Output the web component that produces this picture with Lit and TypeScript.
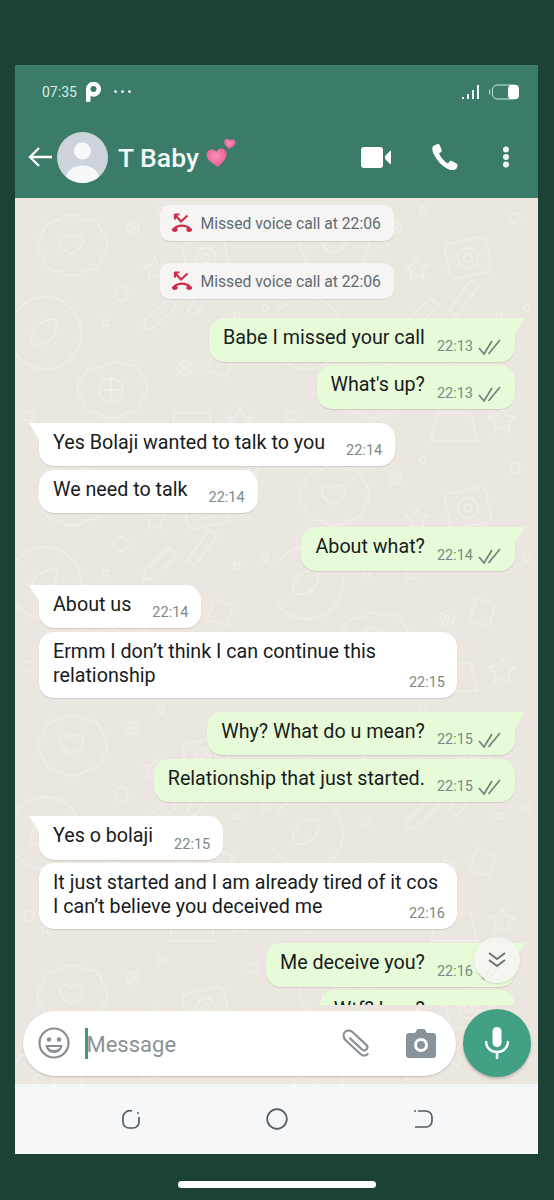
import { LitElement, html, css, svg } from "lit";
import { customElement } from "lit/decorators.js";

type Msg = { text: string[]; time: string; out?: boolean; tail?: boolean; group?: boolean; wide?: boolean };

const messages: Msg[] = [
  { text: ["Babe I missed your call"], time: "22:13", out: true, tail: true },
  { text: ["What's up?"], time: "22:13", out: true },
  { text: ["Yes Bolaji wanted to talk to you"], time: "22:14", tail: true, group: true },
  { text: ["We need to talk"], time: "22:14" },
  { text: ["About what?"], time: "22:14", out: true, tail: true, group: true },
  { text: ["About us"], time: "22:14", tail: true, group: true },
  { text: ["Ermm I don’t think I can continue this", "relationship"], time: "22:15", wide: true },
  { text: ["Why? What do u mean?"], time: "22:15", out: true, tail: true, group: true },
  { text: ["Relationship that just started."], time: "22:15", out: true },
  { text: ["Yes o bolaji"], time: "22:15", tail: true, group: true },
  { text: ["It just started and I am already tired of it cos", "I can’t believe you deceived me"], time: "22:16", wide: true },
  { text: ["Me deceive you?"], time: "22:16", out: true, tail: true, group: true },
  { text: ["Wtf? how?"], time: "22:16", out: true },
];

const ticks = html`<svg class="ticks" viewBox="0 0 24 16" width="24" height="16">
  <path d="M1 9l5 6L14 2M10.500 15L22 1" fill="none" stroke="#72837b" stroke-width="1.700" />
</svg>`;

const missedIcon = html`<svg viewBox="0 0 22 20" width="22" height="20">
  <path d="M4.500 2.500l5.500 6 6.500-6" fill="none" stroke="#cc2d4a" stroke-width="2.200" />
  <path d="M3.500 1.500h5M4 1v5.500" fill="none" stroke="#cc2d4a" stroke-width="2.200" />
  <path d="M3 16c4-4.500 12-4.500 16 0" fill="none" stroke="#cc2d4a" stroke-width="2.400" />
  <ellipse cx="3.800" cy="16.800" rx="2.900" ry="2.100" fill="#cc2d4a" />
  <ellipse cx="18.200" cy="16.800" rx="2.900" ry="2.100" fill="#cc2d4a" />
</svg>`;

const heart = "M10 18C4 13 0 10 0 5.500 0 2 2.500 0 5 0c2 0 4 1 5 3 1-2 3-3 5-3 2.500 0 5 2 5 5.500C20 10 16 13 10 18z";

// wallpaper tile: bumpy blobs, small rings and stars, a camera, a pencil
const doodles = svg`
  <path d="M45 22c8-8 18-6 24 0 9-2 17 4 18 13 7 6 7 17 0 23 0 9-8 15-17 14-6 7-18 8-24 1-9 1-17-5-18-14-7-6-7-17 0-23 1-9 8-15 17-14z" />
  <path d="M56 40c5-6 14-2 12 5-2 6-8 9-12 11-5-3-10-6-11-11-1-7 7-10 11-5z" />
  <circle cx="30" cy="135" r="36" />
  <path d="M16 145c-2-16 12-24 24-24 6 12-6 30-24 24z" />
  <circle cx="118" cy="30" r="6" /><circle cx="118" cy="30" r="2" />
  <path d="M140 60l3 7 8 1-6 5 2 8-7-4-7 4 2-8-6-5 8-1z" />
  <rect x="170" y="42" width="42" height="36" rx="6" transform="rotate(-12 191 60)" />
  <circle cx="191" cy="60" r="10" /><circle cx="191" cy="60" r="4" />
  <circle cx="106" cy="96" r="7" /><circle cx="238" cy="20" r="5" />
  <path d="M130 122l24-22 8 8-24 22-10 2zM172 112l22-30 8 6-22 30z" />
  <path d="M86 170c5-6 15-8 21-3 9-3 18 2 20 11 7 6 7 17 0 23-1 9-9 15-18 14-6 7-18 7-24 0-9 1-17-5-18-14-6-6-6-16 1-22 1-5 8-11 18-9z" />
  <circle cx="96" cy="192" r="12" />
  <path d="M96 180v24M84 192h24" />
  <circle cx="170" cy="170" r="7" /><circle cx="170" cy="170" r="2.500" />
  <path d="M200 150l18 8-6 20-20-6zM225 210l4 8 9 1-7 6 2 9-8-5-8 5 2-9-7-6 9-1z" />
  <path d="M160 215h34l6 28h-46z" />
  <circle cx="14" cy="218" r="5" /><circle cx="146" cy="12" r="3" /><circle cx="90" cy="125" r="3" />
  <circle cx="250" cy="110" r="3" /><circle cx="222" cy="118" r="3" /><circle cx="30" cy="232" r="3" />
`;

@customElement("app-root")
export class AppRoot extends LitElement {
  static styles = css`
    :host {
      display: block;
      width: 554px;
      height: 1200px;
      background: #1c4237;
      font-family: Roboto, "Liberation Sans", sans-serif;
      overflow: hidden;
    }
    .page {
      display: flex;
      flex-direction: column;
      align-items: center;
      padding-top: 65px;
    }
    .screen {
      width: 523px;
      height: 1089px;
      margin-left: -1px;
      display: flex;
      flex-direction: column;
    }
    .top {
      background: #3a7c69;
      color: #fff;
      height: 133px;
      flex: none;
    }
    .status {
      height: 53px;
      padding: 0 18px 0 27px;
      display: flex;
      align-items: center;
      gap: 9px;
      color: #dcebe6;
      font-size: 14px;
    }
    .status .spacer {
      flex: 1;
    }
    .battery {
      margin-left: -2px;
    }
    .dots {
      display: flex;
      gap: 4px;
      margin-left: 3px;
    }
    .dots i {
      width: 3px;
      height: 3px;
      border-radius: 50%;
      background: #e6f0ec;
    }
    .bar {
      height: 80px;
      display: flex;
      align-items: center;
      padding: 0 0 2px 12px;
      box-sizing: border-box;
    }
    .avatar {
      margin-left: 4px;
      flex: none;
    }
    .name {
      font-size: 26.5px;
      font-weight: 500;
      margin-left: 10px;
      color: #f2f8f6;
      display: flex;
      align-items: center;
      gap: 7px;
    }
    .hearts {
      margin-top: -6px;
    }
    .actions {
      margin-left: auto;
      display: flex;
      align-items: center;
    }
    .call {
      margin-left: 41px;
    }
    .kebab {
      margin: 0 28px 0 44px;
    }
    .chat {
      position: relative;
      flex: 1;
      min-height: 0;
      background: #ece6e0;
      overflow: hidden;
    }
    .pattern {
      position: absolute;
      inset: 0;
    }
    .thread {
      position: relative;
      height: 807px;
      box-sizing: border-box;
      overflow: hidden;
      display: flex;
      flex-direction: column;
      padding: 7px 23px 0 24px;
    }
    .missed {
      flex: none;
      align-self: center;
      height: 36px;
      width: 234px;
      box-sizing: border-box;
      margin: 0 0 22px -1px;
      padding-left: 11px;
      display: flex;
      align-items: center;
      gap: 8px;
      border-radius: 10px;
      background: #f6f5f3;
      box-shadow: 0 1px 1px rgba(0, 0, 0, 0.1);
      color: #5f6b72;
      font-size: 15.7px;
    }
    .missed + .bubble {
      margin-top: -3px;
    }
    .bubble {
      flex: none;
      position: relative;
      align-self: flex-start;
      display: flex;
      align-items: flex-end;
      box-sizing: border-box;
      height: 43.5px;
      margin-top: 3.5px;
      padding: 0 13px 7px 14px;
      border-radius: 15px;
      background: #fff;
      box-shadow: 0 1px 1px rgba(0, 0, 0, 0.12);
      color: #171c1c;
      font-size: 19.7px;
      line-height: 24px;
      white-space: nowrap;
    }
    .bubble.group {
      margin-top: 14px;
    }
    .bubble.wide {
      height: 66px;
      width: 418px;
    }
    .bubble.tail.in {
      border-top-left-radius: 0;
    }
    .bubble.tail.out {
      border-top-right-radius: 0;
    }
    .bubble.tail::before {
      content: "";
      position: absolute;
      top: 0;
      width: 0;
      height: 0;
      border-top: 16px solid #fff;
    }
    .bubble.tail.in::before {
      left: -10px;
      border-left: 10px solid transparent;
    }
    .bubble.tail.out::before {
      right: -10px;
      border-right: 10px solid transparent;
      border-top-color: #e8fbd9;
    }
    .bubble.out {
      align-self: flex-end;
      background: #e8fbd9;
      padding-right: 13px;
    }
    .text {
      align-self: flex-start;
      padding-top: 8px;
    }
    .meta {
      margin-left: auto;
      padding-left: 21px;
      display: flex;
      align-items: center;
      gap: 5px;
      color: #7b8a85;
      font-size: 14.5px;
      line-height: 16px;
    }
    .out .meta {
      padding-left: 12px;
    }
    /* the time sits in the corner under the wrapped lines */
    .wide .meta {
      position: absolute;
      right: 12px;
      bottom: 7px;
    }
    .ticks {
      flex: none;
    }
    .scroll {
      position: absolute;
      left: 459px;
      top: 739px;
      width: 46px;
      height: 46px;
      border-radius: 50%;
      background: rgba(245, 245, 240, 0.93);
      box-shadow: 0 1px 2px rgba(0, 0, 0, 0.15);
      display: flex;
      align-items: center;
      justify-content: center;
    }
    .composer {
      position: absolute;
      left: 8px;
      right: 8px;
      bottom: 8px;
      height: 66px;
      display: flex;
      align-items: center;
      gap: 7px;
    }
    .field {
      flex: 1;
      height: 65px;
      background: #fff;
      border-radius: 33px;
      box-shadow: 0 1px 2px rgba(0, 0, 0, 0.18);
      display: flex;
      align-items: center;
      padding-left: 15px;
      color: #8a9296;
      font-size: 22px;
    }
    .hint {
      padding-top: 3px;
      margin-left: -1px;
    }
    .caret {
      width: 2.5px;
      height: 31px;
      background: #3f9a80;
      margin: 0 0 0 15px;
    }
    .clip {
      margin-left: auto;
    }
    .cam {
      margin: 0 20px 0 34px;
    }
    .mic {
      flex: none;
      width: 68px;
      height: 68px;
      border-radius: 50%;
      background: #42a085;
      box-shadow: 0 2px 3px rgba(0, 0, 0, 0.2);
      display: flex;
      align-items: center;
      justify-content: center;
      margin-right: -1px;
    }
    .nav {
      flex: none;
      height: 70px;
      background: #f5f7f9;
      display: flex;
      align-items: center;
      justify-content: center;
      gap: 124px;
    }
    .pill {
      width: 198px;
      height: 7px;
      border-radius: 4px;
      background: #fff;
      margin-top: 27px;
    }
  `;

  renderBubble(m: Msg) {
    const cls = ["bubble", m.out ? "out" : "in", m.tail ? "tail" : "", m.group ? "group" : "", m.wide ? "wide" : ""].join(" ");
    return html`<div class=${cls}>
      <div class="text">${m.text.map((t) => html`<div>${t}</div>`)}</div>
      <div class="meta">${m.time}${m.out ? ticks : ""}</div>
    </div>`;
  }

  render() {
    return html`<div class="page">
      <div class="screen">
        <div class="top">
          <div class="status">
            <span>07:35</span>
            <svg viewBox="0 0 16 20" width="16" height="20">
              <path fill-rule="evenodd" d="M0 7a7.500 7.500 0 1 1 4.500 7v5a1 1 0 0 1-1 1H1a1 1 0 0 1-1-1zM7.500 4a3 3 0 1 0 0 6 3 3 0 0 0 0-6z" fill="#fff" />
            </svg>
            <span class="dots"><i></i><i></i><i></i></span>
            <span class="spacer"></span>
            <svg viewBox="0 0 20 16" width="20" height="16">
              <path d="M2 13v2M7 10v5M12 6v9M17 1v14" stroke="#f0f6f4" stroke-width="2" fill="none" />
            </svg>
            <svg class="battery" viewBox="0 0 32 16" width="32" height="16">
              <path d="M2 5.500q-1 2.500 0 5" stroke="#cfe2dc" fill="none" />
              <rect x="4.500" y="1" width="26" height="14" rx="4.500" fill="none" stroke="#cfe2dc" />
              <rect x="20" y="1" width="11" height="14" rx="3.500" fill="#fff" />
            </svg>
          </div>
          <div class="bar">
            <svg viewBox="0 0 26 24" width="26" height="24">
              <path d="M25 12H3M12 3l-9 9 9 9" fill="none" stroke="#fff" stroke-width="2.300" />
            </svg>
            <svg class="avatar" viewBox="0 0 51 51" width="51" height="51">
              <defs><clipPath id="av"><circle cx="25.500" cy="25.500" r="25.500" /></clipPath></defs>
              <circle cx="25.500" cy="25.500" r="25.500" fill="#cdd3da" />
              <g clip-path="url(#av)" fill="#f7f8f9">
                <circle cx="25.500" cy="19" r="8.500" />
                <ellipse cx="25.500" cy="46" rx="16.500" ry="12.500" />
              </g>
            </svg>
            <div class="name">
              <span>T Baby</span>
              <svg class="hearts" viewBox="0 0 30 30" width="30" height="30">
                <defs>
                  <radialGradient id="hg" cx="0.45" cy="0.4" r="0.65">
                    <stop offset="0" stop-color="#fb8fb8" />
                    <stop offset="1" stop-color="#e9588f" />
                  </radialGradient>
                </defs>
                <path d=${heart} fill="url(#hg)" transform="translate(1 10) rotate(-6 10 9)" />
                <path d=${heart} fill="url(#hg)" transform="translate(18 0) scale(0.56) rotate(8 10 9)" />
              </svg>
            </div>
            <div class="actions">
              <svg viewBox="0 0 30 21" width="30" height="21">
                <rect width="22" height="21" rx="3" fill="#fff" />
                <path d="M24 9l5-5c.500-.500 1-.2 1 .5v12c0 .7-.500 1-1 .5l-5-5z" fill="#fff" />
              </svg>
              <svg class="call" viewBox="0 0 26 26" width="26" height="26">
                <path d="M5.500 0L2 1.500C-.5 3 0 6.500 2 10.500c3 6 7.500 11 13 14 4 2 7.500 2 9.500 0l1-2.500c.2-1-.2-2-1-2.500l-4.500-2.500c-1-.6-2-.2-2.500.5l-1.500 2c-3-1.500-7-5.500-9-10l2-1.500c.8-.6 1-1.500.6-2.500L7.500.8C7 .2 6.300-.2 5.500 0z" fill="#fff" />
              </svg>
              <svg class="kebab" viewBox="0 0 8 22" width="8" height="22">
                <circle cx="4" cy="3.500" r="3" fill="#f2f7f5" /><circle cx="4" cy="11" r="3" fill="#f2f7f5" /><circle cx="4" cy="18.500" r="3" fill="#f2f7f5" />
              </svg>
            </div>
          </div>
        </div>
        <div class="chat">
          <svg class="pattern" width="100%" height="100%">
            <defs>
              <pattern id="doodle" width="262" height="250" patternUnits="userSpaceOnUse">
                <g fill="none" stroke="#f2eee9" stroke-width="1.300">${doodles}</g>
              </pattern>
            </defs>
            <rect width="100%" height="100%" fill="url(#doodle)" />
          </svg>
          <div class="thread">
            <div class="missed">${missedIcon}<span>Missed voice call at 22:06</span></div>
            <div class="missed">${missedIcon}<span>Missed voice call at 22:06</span></div>
            ${messages.map((m) => this.renderBubble(m))}
          </div>
          <div class="scroll">
            <svg viewBox="0 0 20 20" width="20" height="20">
              <path d="M2 3l8 6 8-6M2 10l8 6 8-6" fill="none" stroke="#66757a" stroke-width="2" />
            </svg>
          </div>
          <div class="composer">
            <div class="field">
              <svg viewBox="0 0 32 32" width="32" height="32">
                <circle cx="16" cy="16" r="14.500" fill="none" stroke="#878f95" stroke-width="2.200" />
                <circle cx="11" cy="12.500" r="2.200" fill="#878f95" />
                <circle cx="21" cy="12.500" r="2.200" fill="#878f95" />
                <path d="M7.500 18h17c-.5 5-4 8-8.500 8s-8-3-8.500-8z" fill="#878f95" />
                <path d="M10 20h12c-1 2-3 3-6 3s-5-1-6-3z" fill="#fff" />
              </svg>
              <span class="caret"></span>
              <span class="hint">Message</span>
              <svg class="clip" viewBox="0 0 32 32" width="32" height="30">
                <path d="M29 27c-2 3-6 3-8 1L5 13C2 10 2 6 4.500 4s6-1.500 8 .5L27 18c1.500 1.500 1.500 3.500 0 5s-3.500 1-5-.5L9 10.500" fill="none" stroke="#8a9298" stroke-width="2.300" />
              </svg>
              <svg class="cam" viewBox="0 0 30 30" width="30" height="30">
                <path fill-rule="evenodd" d="M3 5h6l2.500-4h7L21 5h6a3 3 0 0 1 3 3v19a3 3 0 0 1-3 3H3a3 3 0 0 1-3-3V8a3 3 0 0 1 3-3zm12 5a7 7 0 1 0 0 14 7 7 0 0 0 0-14z" fill="#88929a" />
                <circle cx="15" cy="17" r="4" fill="#88929a" />
              </svg>
            </div>
            <div class="mic">
              <svg viewBox="0 0 24 32" width="24" height="32">
                <rect x="7.500" y="0" width="9" height="20" rx="4.500" fill="#fff" />
                <path d="M1 14c0 7 5 11 11 11s11-4 11-11M12 25v7" fill="none" stroke="#fff" stroke-width="2.500" />
              </svg>
            </div>
          </div>
        </div>
        <div class="nav">
          <svg viewBox="0 0 22 22" width="22" height="22">
            <path d="M19 9v5a6 6 0 0 1-6 6H9a6 6 0 0 1-6-6V9a7 7 0 0 1 9-6" fill="none" stroke="#555b60" stroke-width="1.700" />
            <circle cx="18" cy="5" r="1" fill="#555b60" />
          </svg>
          <svg viewBox="0 0 22 22" width="22" height="22">
            <circle cx="11" cy="11" r="9.800" fill="none" stroke="#555b60" stroke-width="1.700" />
          </svg>
          <svg viewBox="0 0 22 22" width="22" height="22">
            <path d="M6 3h8a6 6 0 0 1 6 6v4a6 6 0 0 1-6 6H3" fill="none" stroke="#555b60" stroke-width="1.700" />
            <circle cx="3" cy="3" r="1" fill="#555b60" />
          </svg>
        </div>
      </div>
      <div class="pill"></div>
    </div>`;
  }
}
